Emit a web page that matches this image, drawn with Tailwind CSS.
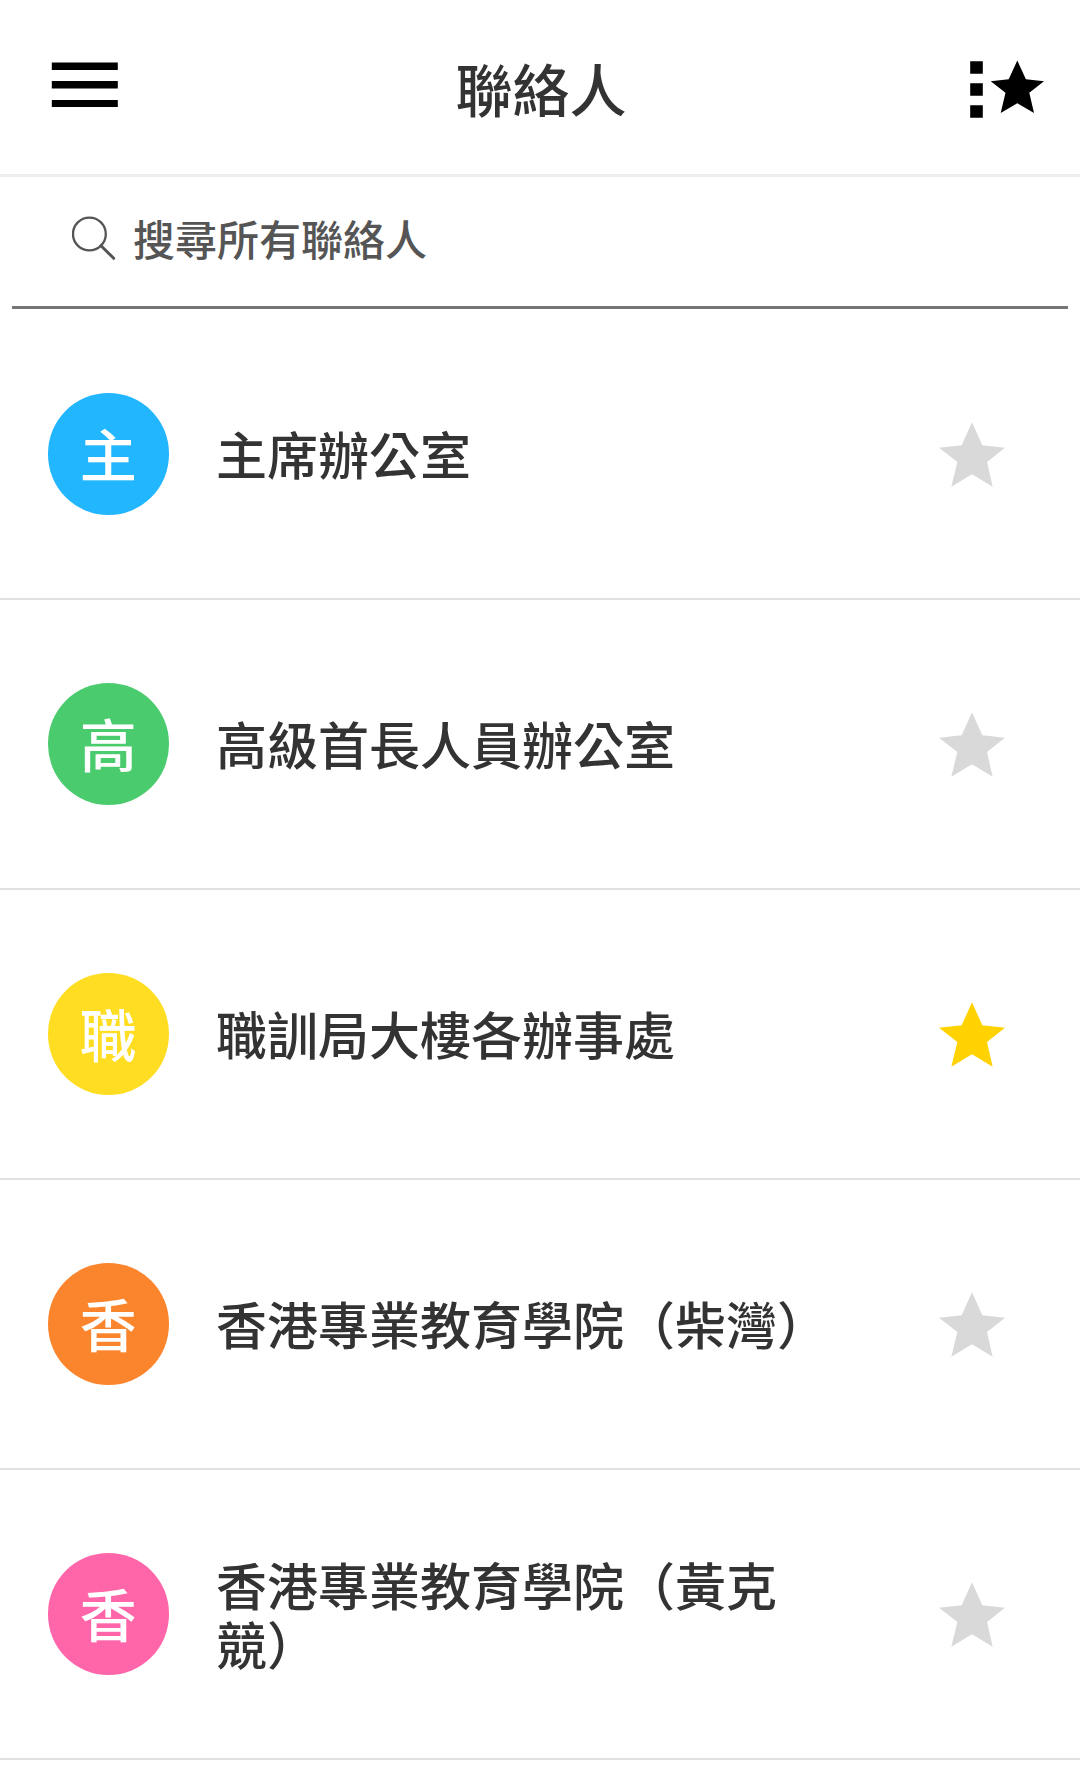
<!DOCTYPE html>
<html lang="zh-Hant">
<head>
    <meta charset="UTF-8">
    <meta name="viewport" content="width=device-width, initial-scale=1.0">
    <title>聯絡人</title>
    <script src="https://cdn.jsdelivr.net/npm/@tailwindcss/browser@4"></script>
    <style>
        body {
            font-family: 'Noto Sans CJK TC', sans-serif;
        }
    </style>
</head>
<body class="bg-white text-[#333333] font-medium h-[1776px] overflow-hidden">
    <!-- Star shape shared by every row -->
    <svg class="hidden">
        <symbol id="star" viewBox="0 0 198 193">
            <path d="M99 0L130 69L198 76L144 119L161 193L99 156L37 193L55 119L0 76L68 69Z"/>
        </symbol>
    </svg>

    <!-- Header -->
    <header class="flex items-start justify-between h-[177px] border-b-[3px] border-[#eeeeee] pl-[51px] pr-[36px]">
        <svg class="w-[68px] h-[46px] mt-[62px]" viewBox="0 0 68 46">
            <path d="M.8 .6H66.8V8H.8ZM.8 19.1H66.8V26.5H.8ZM.8 37.9H66.8V45H.8Z"/>
        </svg>
        <h1 class="text-[57px] leading-[80px] mt-[47px] -ml-[7px]">聯絡人</h1>
        <svg class="w-[74px] h-[58px] mt-[60px]" viewBox="0 0 74 58">
            <path d="M.2 1.2H12.8V13.8H.2ZM.2 23.2H12.8V35.8H.2ZM.2 45.2H12.8V57.8H.2Z"/>
            <path d="M47.3 .6L55.9 19.2L74 21.2L59.3 32.7L64 53L47.3 43.2L30.7 53L35.5 32.7L20.7 21.2L38.7 19.2Z"/>
        </svg>
    </header>

    <!-- Search -->
    <div class="flex items-center h-[132px] mx-3 pl-[60px] pb-[7px] border-b-[3px] border-[#757575] text-[#555555]">
        <svg class="w-[44px] h-[44px]" viewBox="0 0 44 44" fill="none" stroke="currentColor">
            <circle cx="17.4" cy="18" r="16.4" stroke-width="2.3"/>
            <path d="M29 29.7L41.7 42.3" stroke-width="3" stroke-linecap="round"/>
        </svg>
        <span class="text-[42px] leading-[50px] ml-[17px]">搜尋所有聯絡人</span>
    </div>

    <!-- Contact list -->
    <ul class="pt-px">
        <li class="flex items-center h-[290px] border-b-2 border-[#e0e0e0] pl-[47.5px] pr-[75px]">
            <div class="flex items-center justify-center size-[121.5px] pb-[4px] rounded-full bg-[#22b6ff] text-white text-[57px] leading-none">主</div>
            <p class="w-[630px] ml-[47px] pb-[2px] text-[51px] leading-[59px]">主席辦公室</p>
            <svg class="w-[66px] h-[65px] ml-auto fill-[#d9d9d9]"><use href="#star"/></svg>
        </li>
        <li class="flex items-center h-[290px] border-b-2 border-[#e0e0e0] pl-[47.5px] pr-[75px]">
            <div class="flex items-center justify-center size-[121.5px] pb-[4px] rounded-full bg-[#4acb6d] text-white text-[57px] leading-none">高</div>
            <p class="w-[630px] ml-[47px] pb-[2px] text-[51px] leading-[59px]">高級首長人員辦公室</p>
            <svg class="w-[66px] h-[65px] ml-auto fill-[#d9d9d9]"><use href="#star"/></svg>
        </li>
        <li class="flex items-center h-[290px] border-b-2 border-[#e0e0e0] pl-[47.5px] pr-[75px]">
            <div class="flex items-center justify-center size-[121.5px] pb-[4px] rounded-full bg-[#ffdd22] text-white text-[57px] leading-none">職</div>
            <p class="w-[630px] ml-[47px] pb-[2px] text-[51px] leading-[59px]">職訓局大樓各辦事處</p>
            <svg class="w-[66px] h-[65px] ml-auto fill-[#ffd200]"><use href="#star"/></svg>
        </li>
        <li class="flex items-center h-[290px] border-b-2 border-[#e0e0e0] pl-[47.5px] pr-[75px]">
            <div class="flex items-center justify-center size-[121.5px] pb-[4px] rounded-full bg-[#fb852d] text-white text-[57px] leading-none">香</div>
            <p class="w-[630px] ml-[47px] pb-[2px] text-[51px] leading-[59px]">香港專業教育學院（柴灣）</p>
            <svg class="w-[66px] h-[65px] ml-auto fill-[#d9d9d9]"><use href="#star"/></svg>
        </li>
        <li class="flex items-center h-[290px] border-b-2 border-[#e0e0e0] pl-[47.5px] pr-[75px]">
            <div class="flex items-center justify-center size-[121.5px] pb-[4px] rounded-full bg-[#ff66a9] text-white text-[57px] leading-none">香</div>
            <p class="w-[630px] ml-[47px] pb-px text-[51px] leading-[59px]">香港專業教育學院（黃克競）</p>
            <svg class="w-[66px] h-[65px] ml-auto fill-[#d9d9d9]"><use href="#star"/></svg>
        </li>
    </ul>
</body>
</html>
